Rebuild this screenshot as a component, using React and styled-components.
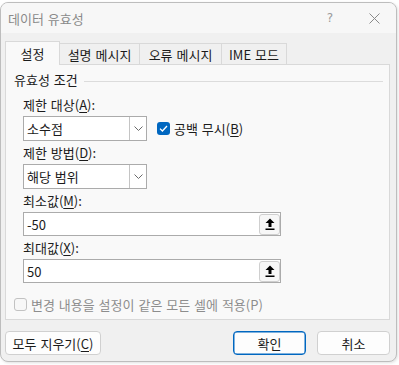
import React from 'react';
import styled, { createGlobalStyle } from 'styled-components';

const Global = createGlobalStyle`
  html, body {
    margin: 0;
    padding: 0;
    background: #ffffff;
  }
  body {
    font-family: "Noto Sans CJK KR", "Noto Sans", sans-serif;
    font-size: 13px;
    word-spacing: 1px;
    color: #1b1b1b;
  }
`;

const Page = styled.div`
  width: 399px;
  height: 365px;
  padding-top: 2px;
  box-sizing: border-box;
  overflow: hidden;
`;

const Dialog = styled.div`
  width: 397px;
  height: 360px;
  box-sizing: border-box;
  border: 1px solid #bdbdbd;
  border-radius: 8px;
  background: #f0f0f0;
  overflow: hidden;
  display: flex;
  flex-direction: column;
  box-shadow: 1px 1px 3px rgba(0, 0, 0, 0.12);
`;

const TitleBar = styled.div`
  height: 30px;
  flex: none;
  display: flex;
  align-items: center;
  padding-left: 7px;
  background: #f7f7f7;
  color: #8a8a8a;
  font-size: 13px;
`;

const TitleText = styled.div`
  flex: 1;
`;

const TitleButton = styled.div`
  width: 44px;
  height: 30px;
  display: flex;
  align-items: center;
  justify-content: center;
  color: #9a9a9a;
  font-family: "DejaVu Sans", sans-serif;
  font-size: 12px;
`;

const Body = styled.div`
  flex: 1;
  padding: 8px 6px 0 4px;
  display: flex;
  flex-direction: column;
`;

const TabList = styled.div`
  display: flex;
  align-items: flex-end;
  height: 23px;
  position: relative;
  z-index: 1;
`;

const Tab = styled.div`
  width: ${p => p.w}px;
  height: ${p => (p.active ? 24 : 21)}px;
  margin-bottom: ${p => (p.active ? -1 : 0)}px;
  box-sizing: border-box;
  display: flex;
  align-items: center;
  justify-content: center;
  border: 1px solid #d9d9d9;
  border-bottom: none;
  border-left: ${p => (p.active || p.first ? '1px solid #d9d9d9' : 'none')};
  background: ${p => (p.active ? '#f9f9f9' : '#f0f0f0')};
  color: #1b1b1b;
`;

const Panel = styled.div`
  height: 256px;
  box-sizing: border-box;
  border: 1px solid #d9d9d9;
  background: #f9f9f9;
  padding: 7px 8px 0 8px;
`;

const Legend = styled.div`
  display: flex;
  align-items: center;
  gap: 6px;
  height: 16px;
  line-height: 16px;
  margin-right: -2px;
  color: #1b1b1b;
`;

const LegendLine = styled.div`
  flex: 1;
  height: 1px;
  background: #dcdcdc;
  margin-top: 2px;
`;

const Fields = styled.div`
  padding-left: 9px;
  padding-top: 9px;
`;

const Field = styled.div`
  margin-top: ${p => p.mt ?? 4}px;
`;

const Label = styled.div`
  height: 16px;
  line-height: 16px;
  margin-bottom: 3px;
  color: #1b1b1b;
`;

const Key = styled.span`
  text-decoration: underline;
  text-underline-offset: 2px;
`;

const ControlRow = styled.div`
  display: flex;
  align-items: center;
`;

const Select = styled.div`
  width: 124px;
  height: 25px;
  box-sizing: border-box;
  border: 1px solid #ababab;
  background: #ffffff;
  display: flex;
`;

const SelectValue = styled.div`
  flex: 1;
  padding-left: 3px;
  display: flex;
  align-items: center;
`;

const SelectArrow = styled.div`
  width: 16px;
  border-left: 1px solid #c4c4c4;
  display: flex;
  align-items: center;
  justify-content: center;
`;

const Check = styled.div`
  width: 13px;
  height: 13px;
  box-sizing: border-box;
  border-radius: 3px;
  flex: none;
  display: flex;
  align-items: center;
  justify-content: center;
  background: ${p => (p.checked ? '#0067c0' : '#f7f7f7')};
  border: ${p => (p.checked ? 'none' : '1px solid #c2c2c2')};
`;

const CheckLabel = styled.div`
  margin-left: 4px;
  color: ${p => (p.disabled ? '#8d8d8d' : '#1b1b1b')};
`;

const CheckWrap = styled.div`
  display: flex;
  align-items: center;
  margin-left: ${p => p.ml ?? 0}px;
  margin-top: ${p => p.mt ?? 0}px;
`;

const Input = styled.div`
  width: 258px;
  height: 24px;
  box-sizing: border-box;
  border: 1px solid #ababab;
  background: #ffffff;
  display: flex;
  align-items: center;
  padding-left: 3px;
`;

const InputText = styled.div`
  flex: 1;
`;

const RefButton = styled.div`
  width: 21px;
  height: 21px;
  box-sizing: border-box;
  border: 1px solid #cfcfcf;
  border-radius: 3px;
  background: #f7f7f7;
  display: flex;
  align-items: center;
  justify-content: center;
`;

const Footer = styled.div`
  display: flex;
  align-items: center;
  justify-content: space-between;
  margin-top: 11px;
`;

const ButtonGroup = styled.div`
  display: flex;
  gap: 11px;
`;

const Button = styled.div`
  width: ${p => p.w}px;
  height: 24px;
  box-sizing: border-box;
  border: 1px solid ${p => (p.primary ? '#0067c0' : '#d0d0d0')};
  border-radius: 4px;
  background: #fdfdfd;
  display: flex;
  align-items: center;
  justify-content: center;
  color: #1b1b1b;
  box-shadow: ${p => (p.primary ? 'inset 0 0 0 0.5px #0067c0' : 'none')};
`;

const Chevron = () => (
  <svg width="9" height="5" viewBox="0 0 9 5">
    <path d="M0.5 0.5 L4.5 4.5 L8.5 0.5" fill="none" stroke="#6a6a6a" strokeWidth="1" />
  </svg>
);

const Tick = () => (
  <svg width="9" height="7" viewBox="0 0 9 7">
    <path d="M1 3.6 L3.4 6 L8 1" fill="none" stroke="#ffffff" strokeWidth="1.3" />
  </svg>
);

const Upload = () => (
  <svg width="10" height="12" viewBox="0 0 10 12">
    <path d="M5 0.5 L9.5 5 L6.5 5 L6.5 9 L3.5 9 L3.5 5 L0.5 5 Z" fill="#000" />
    <rect x="0.5" y="10.5" width="9" height="1.5" fill="#000" />
  </svg>
);

const Close = () => (
  <svg width="11" height="11" viewBox="0 0 11 11">
    <path d="M0.5 0.5 L10.5 10.5 M10.5 0.5 L0.5 10.5" stroke="#8a8a8a" strokeWidth="1" />
  </svg>
);

const tabs = [
  { label: '설정', w: 55, active: true },
  { label: '설명 메시지', w: 80 },
  { label: '오류 메시지', w: 82 },
  { label: 'IME 모드', w: 65 },
];

export default function App() {
  return (
    <Page>
      <Global />
      <Dialog>
        <TitleBar>
          <TitleText>데이터 유효성</TitleText>
          <TitleButton>?</TitleButton>
          <TitleButton><Close /></TitleButton>
        </TitleBar>
        <Body>
          <TabList>
            {tabs.map((t, i) => (
              <Tab key={t.label} w={t.w} active={t.active} first={i === 0}>{t.label}</Tab>
            ))}
          </TabList>
          <Panel>
            <Legend>
              유효성 조건
              <LegendLine />
            </Legend>
            <Fields>
              <Field mt={0}>
                <Label>제한 대상(<Key>A</Key>):</Label>
                <ControlRow>
                  <Select>
                    <SelectValue>소수점</SelectValue>
                    <SelectArrow><Chevron /></SelectArrow>
                  </Select>
                  <CheckWrap ml={10}>
                    <Check checked><Tick /></Check>
                    <CheckLabel>공백 무시(<Key>B</Key>)</CheckLabel>
                  </CheckWrap>
                </ControlRow>
              </Field>
              <Field>
                <Label>제한 방법(<Key>D</Key>):</Label>
                <Select>
                  <SelectValue>해당 범위</SelectValue>
                  <SelectArrow><Chevron /></SelectArrow>
                </Select>
              </Field>
              <Field>
                <Label>최소값(<Key>M</Key>):</Label>
                <Input>
                  <InputText>-50</InputText>
                  <RefButton><Upload /></RefButton>
                </Input>
              </Field>
              <Field>
                <Label>최대값(<Key>X</Key>):</Label>
                <Input>
                  <InputText>50</InputText>
                  <RefButton><Upload /></RefButton>
                </Input>
              </Field>
            </Fields>
            <CheckWrap mt={12}>
              <Check />
              <CheckLabel disabled>변경 내용을 설정이 같은 모든 셀에 적용(P)</CheckLabel>
            </CheckWrap>
          </Panel>
          <Footer>
            <Button w={96}>모두 지우기(<Key>C</Key>)</Button>
            <ButtonGroup>
              <Button w={73} primary>확인</Button>
              <Button w={73}>취소</Button>
            </ButtonGroup>
          </Footer>
        </Body>
      </Dialog>
    </Page>
  );
}
